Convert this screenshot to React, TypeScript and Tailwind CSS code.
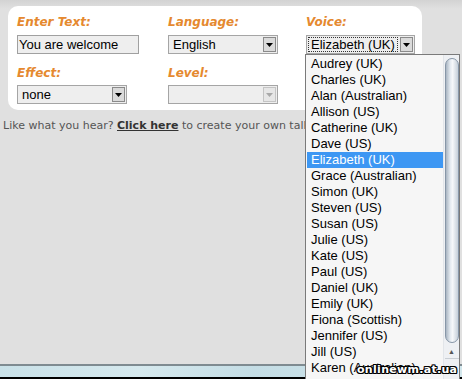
import React from 'react';

const voices = [
  'Audrey (UK)',
  'Charles (UK)',
  'Alan (Australian)',
  'Allison (US)',
  'Catherine (UK)',
  'Dave (US)',
  'Elizabeth (UK)',
  'Grace (Australian)',
  'Simon (UK)',
  'Steven (US)',
  'Susan (US)',
  'Julie (US)',
  'Kate (US)',
  'Paul (US)',
  'Daniel (UK)',
  'Emily (UK)',
  'Fiona (Scottish)',
  'Jennifer (US)',
  'Jill (US)',
  'Karen (Australian)',
  'Lee (Australian)',
];

const Arrow = ({ disabled }: { disabled?: boolean }) => (
  <svg width="7" height="4" viewBox="0 0 7 4">
    <polygon points="0,0 7,0 3.5,4" fill={disabled ? '#a8a8a8' : '#000'} />
  </svg>
);

const Label = ({ children }: { children: React.ReactNode }) => (
  <div className="h-[16px] leading-[16px] text-[12px] font-bold italic text-[#e5892f] font-['DejaVu_Sans',sans-serif]">
    {children}
  </div>
);

const FakeSelect = ({ value, disabled }: { value?: string; disabled?: boolean }) => (
  <div className="w-[110px] h-[19px] border border-[#a5a5a5] bg-[#eeeeee] flex items-center pl-[4px] pr-[1px]">
    <span className="flex-1 text-[13px] leading-[15px] text-black">{value}</span>
    <div
      className={
        disabled
          ? 'w-[13px] h-[15px] border border-[#c4c4c4] bg-[#e6e6e6] flex items-center justify-center'
          : 'w-[13px] h-[15px] border border-[#8a8a8a] bg-[#dadada] flex items-center justify-center'
      }
    >
      <Arrow disabled={disabled} />
    </div>
  </div>
);

export default function App() {
  return (
    <div className="relative w-[462px] h-[379px] overflow-hidden flex flex-col bg-[linear-gradient(#d3d3d3,#e0e0e0_9px)] font-['Liberation_Sans',Arial,sans-serif]">
      {/* form panel */}
      <div className="pt-[6px] pl-[8px]">
        <div className="w-[414px] rounded-[10px] bg-white pt-[8px] pb-[6px] pl-[9px] flex">
          <div className="w-[151px] flex flex-col">
            <Label>Enter Text:</Label>
            <div className="mt-[5px] w-[122px] h-[19px] border border-[#a0a0a0] bg-[#eeeeee] pl-[1px] flex items-center text-[13px] text-black">
              You are welcome
            </div>
            <div className="mt-[11px]">
              <Label>Effect:</Label>
            </div>
            <div className="mt-[4px]">
              <FakeSelect value="none" />
            </div>
          </div>
          <div className="w-[138px] flex flex-col">
            <Label>Language:</Label>
            <div className="mt-[5px]">
              <FakeSelect value="English" />
            </div>
            <div className="mt-[11px]">
              <Label>Level:</Label>
            </div>
            <div className="mt-[4px]">
              <FakeSelect disabled />
            </div>
          </div>
          <div className="flex flex-col">
            <Label>Voice:</Label>
            <div className="mt-[5px] w-[109px] h-[19px] border border-[#a5a5a5] bg-[#eeeeee] flex items-center pl-[1px] pr-[1px]">
              <div className="w-[91px] h-[15px] border border-dotted border-[#333] flex items-center pl-[2px] text-[13px] leading-[13px] text-black">
                Elizabeth (UK)
              </div>
              <div className="ml-[2px] w-[13px] h-[15px] border border-[#8a8a8a] bg-[#dadada] flex items-center justify-center">
                <Arrow />
              </div>
            </div>
          </div>
        </div>
      </div>

      <div className="mt-[9px] ml-[3px] w-[302px] overflow-hidden">
        <p className="text-[11px] leading-[14px] text-[#555] whitespace-nowrap font-['DejaVu_Sans',Verdana,sans-serif]">
          Like what you hear?{' '}
          <a className="font-bold underline text-[#333]">Click here</a> to create your own talking character
        </p>
      </div>

      <div className="flex-1" />

      <div className="h-[15px] flex flex-col">
        <div className="h-[2px] bg-[#7f8b91]" />
        <div className="flex-1 bg-[linear-gradient(90deg,#c9e1e8,#d6e9ee_30%,#c4dde5_55%,#d3e7ec)]" />
        <div className="h-[2px] bg-black" />
      </div>

      {/* open voice dropdown */}
      <div className="absolute left-[305px] top-[54px] w-[155px] h-[340px] border border-[#7a7a7a] bg-[#f6f6f6] flex">
        <div className="flex-1 pt-[1px] pl-[1px]">
          {voices.map((v) => (
            <div
              key={v}
              className={
                v === 'Elizabeth (UK)'
                  ? 'h-[16px] leading-[16px] pl-[4px] text-[13px] whitespace-nowrap bg-[#3d97f3] text-white'
                  : 'h-[16px] leading-[16px] pl-[4px] text-[13px] whitespace-nowrap text-black'
              }
            >
              {v}
            </div>
          ))}
        </div>
        <div className="w-[16px] border-l border-[#e2e5e9] bg-[#eef0f3] flex flex-col items-center">
          <div className="mt-[3px] w-[14px] h-[285px] rounded-[7px] border border-[#8796a7] bg-[linear-gradient(90deg,#a9b5c2,#e4eaf0_35%,#f6f8fa_55%,#c5cfd9)]" />
          <div className="mt-[4px] h-[8px] flex items-center justify-center text-[7px] leading-[7px] text-[#555]">▲</div>
          <div className="mt-[3px] w-[14px] h-px bg-[#c9ced4]" />
        </div>
      </div>

      {/* watermark */}
      <div className="absolute left-[357px] top-[363px] text-[11px] leading-[13px] font-bold tracking-[0.3px] text-white font-['DejaVu_Sans',sans-serif] [text-shadow:1px_0_0_#000,-1px_0_0_#000,0_1px_0_#000,0_-1px_0_#000,1px_1px_0_#000,-1px_-1px_0_#000,1px_-1px_0_#000,-1px_1px_0_#000]">
        onlinewm.at.ua
      </div>
    </div>
  );
}
